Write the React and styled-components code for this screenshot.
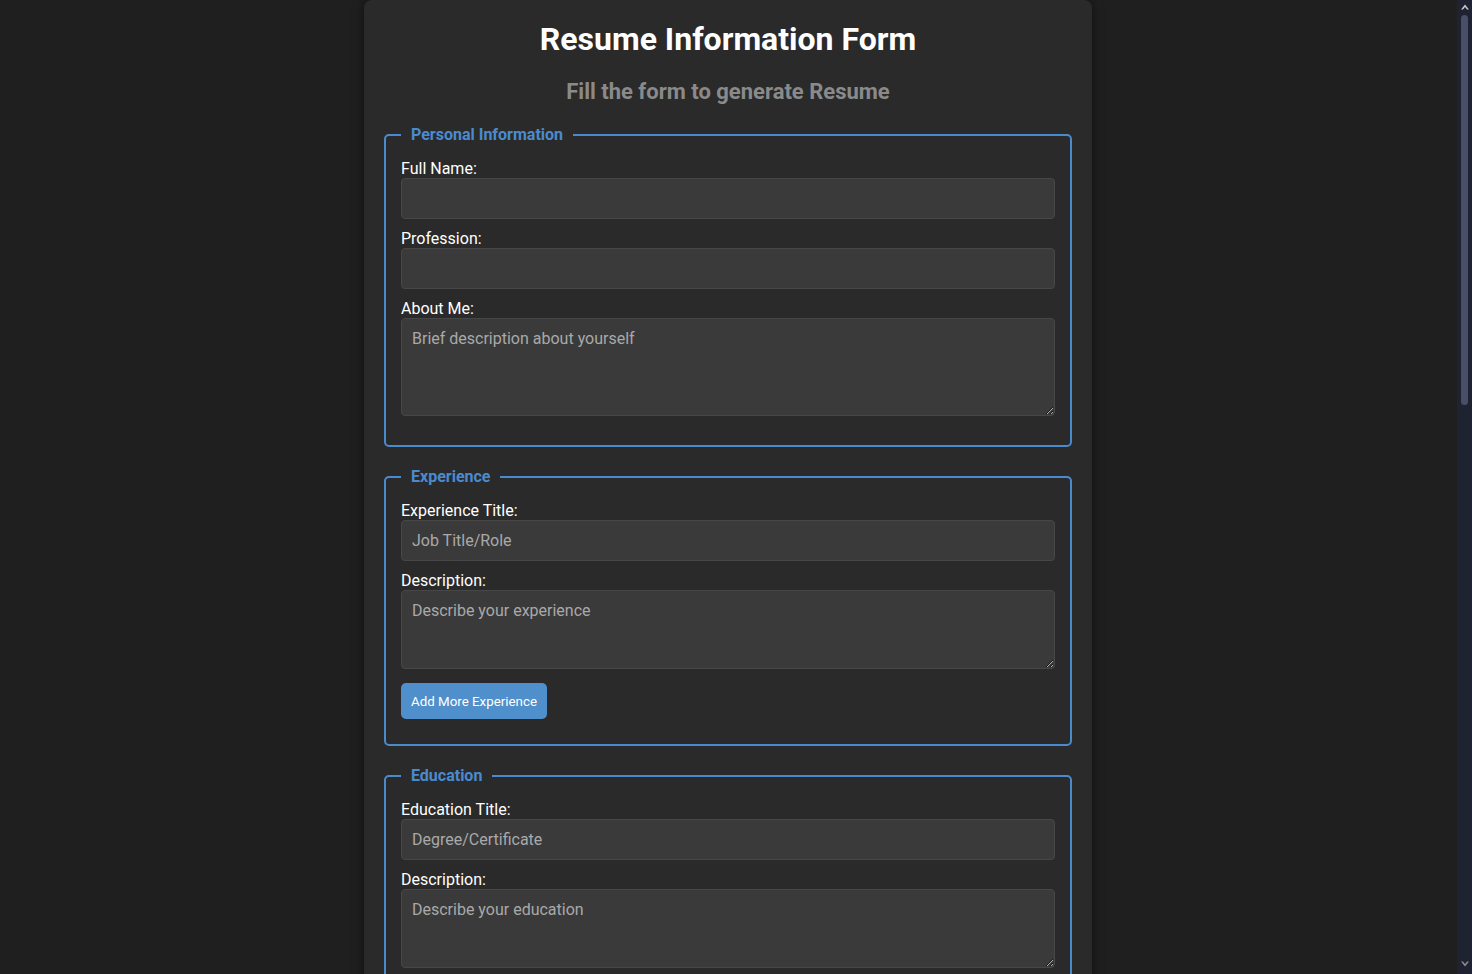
import React, { useState } from "react";
import styled, { createGlobalStyle } from "styled-components";

// Global page styles
const GlobalStyle = createGlobalStyle`
  html {
    color-scheme: dark;
  }
  body {
    margin: 0;
    background-color: #1f1f1f;
    font-family: Roboto, "Liberation Sans", Arial, sans-serif;
    color: #ffffff;
  }
  * {
    box-sizing: border-box;
  }
`;

// Resume form page
export default function App() {
  const [experiences, setExperiences] = useState([{ title: "", description: "" }]);
  const [educations, setEducations] = useState([{ title: "", description: "" }]);

  return (
    <>
      <GlobalStyle />
      <Page>
        <Card>
          <Title>Resume Information Form</Title>
          <Subtitle>Fill the form to generate Resume</Subtitle>
          <form onSubmit={(e) => e.preventDefault()}>
            <Section>
              <Legend>Personal Information</Legend>
              <Label>Full Name:</Label>
              <Input type="text" />
              <Label>Profession:</Label>
              <Input type="text" />
              <Label>About Me:</Label>
              <TextArea rows={4} $height={98} placeholder="Brief description about yourself" />
            </Section>

            <Section>
              <Legend>Experience</Legend>
              {experiences.map((exp, i) => (
                <div key={i}>
                  <Label>Experience Title:</Label>
                  <Input type="text" placeholder="Job Title/Role" />
                  <Label>Description:</Label>
                  <TextArea rows={3} $height={79} placeholder="Describe your experience" />
                </div>
              ))}
              <AddButton
                type="button"
                onClick={() => setExperiences([...experiences, { title: "", description: "" }])}
              >
                Add More Experience
              </AddButton>
            </Section>

            <Section>
              <Legend>Education</Legend>
              {educations.map((edu, i) => (
                <div key={i}>
                  <Label>Education Title:</Label>
                  <Input type="text" placeholder="Degree/Certificate" />
                  <Label>Description:</Label>
                  <TextArea rows={3} $height={79} placeholder="Describe your education" />
                </div>
              ))}
              <AddButton
                type="button"
                onClick={() => setEducations([...educations, { title: "", description: "" }])}
              >
                Add More Education
              </AddButton>
            </Section>

            <Section>
              <Legend>Skills</Legend>
              <Label>Skill:</Label>
              <Input type="text" placeholder="e.g. JavaScript" />
              <AddButton type="button">Add More Skills</AddButton>
            </Section>

            <Section>
              <Legend>Projects</Legend>
              <Label>Project Title:</Label>
              <Input type="text" placeholder="Project Name" />
              <Label>Description:</Label>
              <TextArea rows={3} $height={79} placeholder="Describe your project" />
              <AddButton type="button">Add More Projects</AddButton>
            </Section>

            <Section>
              <Legend>Contact Information</Legend>
              <Label>Email:</Label>
              <Input type="email" placeholder="example@mail.com" />
              <Label>Phone:</Label>
              <Input type="text" placeholder="Phone Number" />
              <Label>Address:</Label>
              <Input type="text" placeholder="City, Country" />
              <Label>LinkedIn:</Label>
              <Input type="text" placeholder="LinkedIn Profile URL" />
              <Label>GitHub:</Label>
              <Input type="text" placeholder="GitHub Profile URL" />
            </Section>

            <SubmitButton type="submit">Generate Resume</SubmitButton>
          </form>
        </Card>
      </Page>

      {/* window scrollbar, drawn over the page edge */}
      <ScrollTrack>
        <ScrollArrow viewBox="0 0 8 5" $top>
          <path d="M0 5 L4 0 L8 5 L6 5 L4 2.5 L2 5 Z" fill="#c9c9c9" />
        </ScrollArrow>
        <ScrollThumb />
        <ScrollArrow viewBox="0 0 8 5">
          <path d="M0 0 L4 5 L8 0 L6 0 L4 2.5 L2 0 Z" fill="#8c8c8c" />
        </ScrollArrow>
      </ScrollTrack>
    </>
  );
}

const Page = styled.div`
  width: 100%;
  padding-right: 16px;
  padding-bottom: 40px;
`;

const Card = styled.div`
  width: 728px;
  margin: 0 auto;
  padding: 20px 20px 30px;
  background-color: #2a2a2a;
  border-radius: 8px;
  box-shadow: 0 0 12px rgba(0, 0, 0, 0.5);
`;

const Title = styled.h1`
  margin: 0 0 21px;
  font-size: 32px;
  font-weight: 700;
  text-align: center;
  color: #ffffff;
`;

const Subtitle = styled.h2`
  margin: 0 0 21px;
  font-size: 22px;
  font-weight: 700;
  text-align: center;
  color: #8a8a8a;
`;

const Section = styled.fieldset`
  margin: 0 0 20px;
  padding: 15px 15px 15px;
  border: 2px solid #4a8bcf;
  border-radius: 5px;
  min-width: 0;
`;

const Legend = styled.legend`
  padding: 0 10px;
  font-size: 16px;
  font-weight: 700;
  color: #4a8bcf;
`;

const Label = styled.label`
  display: block;
  font-size: 16px;
  font-weight: 400;
  color: #ffffff;
`;

const Input = styled.input`
  display: block;
  width: 100%;
  height: 41px;
  margin: 0 0 10px;
  padding: 10px;
  font-family: inherit;
  font-size: 16px;
  color: #ffffff;
  background-color: #3a3a3a;
  border: 1px solid #474747;
  border-radius: 4px;
  outline: none;

  &::placeholder {
    color: #a9a9a9;
  }
`;

const TextArea = styled.textarea`
  display: block;
  width: 100%;
  height: ${(p) => p.$height}px;
  margin: 0 0 14px;
  padding: 10px;
  font-family: inherit;
  font-size: 16px;
  color: #ffffff;
  background-color: #3a3a3a;
  border: 1px solid #474747;
  border-radius: 4px;
  resize: vertical;
  outline: none;

  &::placeholder {
    color: #a9a9a9;
  }
`;

const AddButton = styled.button`
  display: block;
  height: 36px;
  margin: 0 0 10px;
  padding: 0 10px;
  font-family: inherit;
  font-size: 13.33px;
  font-weight: 400;
  color: #ffffff;
  background-color: #4f8fcc;
  border: none;
  border-radius: 5px;
  cursor: pointer;
`;

const SubmitButton = styled.button`
  display: block;
  width: 100%;
  padding: 12px;
  font-family: inherit;
  font-size: 16px;
  font-weight: 700;
  color: #ffffff;
  background-color: #4f8fcc;
  border: none;
  border-radius: 5px;
  cursor: pointer;
`;

const ScrollTrack = styled.div`
  position: fixed;
  top: 0;
  right: 0;
  width: 15px;
  height: 100vh;
  display: flex;
  flex-direction: column;
  align-items: center;
  padding: 4px 0;
  background-color: #1f2230;
`;

const ScrollArrow = styled.svg`
  width: 8px;
  height: 6px;
  flex-shrink: 0;
  margin-top: ${(p) => (p.$top ? "0" : "auto")};
  margin-bottom: ${(p) => (p.$top ? "0" : "3px")};
`;

const ScrollThumb = styled.div`
  width: 7px;
  height: 390px;
  margin-top: 5px;
  border-radius: 4px;
  background-color: #4a4f68;
`;
